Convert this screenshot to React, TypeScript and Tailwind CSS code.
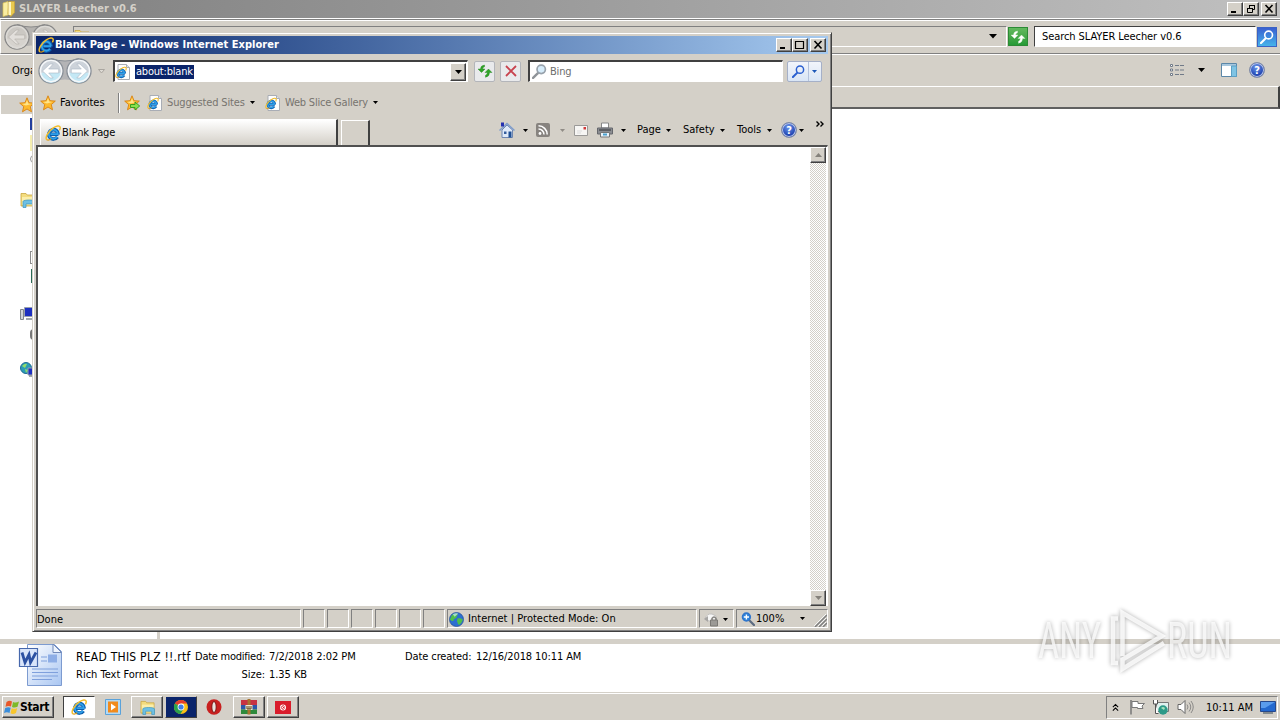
import type { ReactNode } from 'react';
import clsx from 'clsx';

const inset = 'border border-t-[#808080] border-l-[#808080] border-r-white border-b-white';
const raised =
  'border border-t-white border-l-white border-r-[#404040] border-b-[#404040] shadow-[inset_-1px_-1px_0_#808080]';

function Arrow({ className, color = '#000', w = 5 }: { className?: string; color?: string; w?: number }) {
  return (
    <svg className={clsx('shrink-0', className)} width={w} height={(w + 1) / 2} viewBox="0 0 6 3" preserveAspectRatio="none">
      <path d="M0 0h6L3 3z" fill={color} />
    </svg>
  );
}

function IeMark() {
  return (
    <>
      <path d="M13.4 9.2H5.2M13.2 9.4A4.7 4.7 0 1 0 12.4 12" fill="none" stroke="#0d5fae" strokeWidth="3.6" />
      <path d="M13 9.1H5.5M12.8 9.2A4.5 4.5 0 1 0 12 11.8" fill="none" stroke="#2fa0ea" strokeWidth="1.8" />
      <path d="M2 14.8C-.5 13 3 6.500 8 3.200 11.500 .8 15 .2 15.200 2.500c.1 1-.3 2-.8 2.800" fill="none" stroke="#f3bd2b" strokeWidth="1.500" />
      <path d="M2 14.8c1 .6 2.800 0 4.200-1" fill="none" stroke="#d99a14" strokeWidth="1.300" />
    </>
  );
}

function IeIcon({ size = 16, className }: { size?: number; className?: string }) {
  return (
    <svg className={clsx('shrink-0', className)} width={size} height={size} viewBox="0 0 16 16">
      <IeMark />
    </svg>
  );
}

function IePage({ className }: { className?: string }) {
  return (
    <svg className={clsx('shrink-0', className)} width="16" height="16" viewBox="0 0 16 16">
      <path d="M3 .5h8.500l3 3v12H3z" fill="#fdfdfd" stroke="#a9adb5" />
      <path d="M11.500 .5v3h3" fill="#dfe3ea" stroke="#a9adb5" />
      <g transform="translate(0 2.500) scale(.74)">
        <IeMark />
      </g>
    </svg>
  );
}

function Star({ add, className }: { add?: boolean; className?: string }) {
  return (
    <svg className={clsx('shrink-0', className)} width="16" height="16" viewBox="0 0 16 16">
      <path d="M8 .8l2 4.900 5.300.4-4 3.500 1.200 5.200L8 12l-4.500 2.800 1.200-5.200-4-3.500L6 5.700z" fill="#fdb92c" stroke="#d98212" strokeWidth=".9" />
      <path d="M8 3l1.200 3.600 3.300.4-5.500 1.500-4-1.500 3.700-.4z" fill="#ffe48a" />
      {add && <path d="M6.500 9.500h4.500V7l4.700 4-4.700 4v-2.500H6.500z" fill="#8be04e" stroke="#2a9a1e" strokeWidth=".9" />}
    </svg>
  );
}

function Folder({ library, size = 16, className }: { library?: boolean; size?: number; className?: string }) {
  return (
    <svg className={clsx('shrink-0', className)} width={size} height={size} viewBox="0 0 16 16">
      <path d="M1 1.500h5l1.200 1.500H15v11H1z" fill="#f3dc7e" stroke="#c9a640" strokeWidth=".8" />
      <path d="M2 5h12.500v8H2z" fill="#fbeeaa" />
      {library && <path d="M3 15.500V9.500C3 7.500 15.500 7.500 15.500 9.500v6h-3V12H6v3.500z" fill="#6ec0e4" stroke="#3c92bb" strokeWidth=".7" />}
    </svg>
  );
}

function FolderSide() {
  return (
    <svg className="shrink-0" width="14" height="16" viewBox="0 0 14 16">
      <path d="M1 2l5-1.500V14l-5 1.500z" fill="#f9eda2" stroke="#d9bf52" strokeWidth=".7" />
      <path d="M7 .5h5.500v11L9 15.500 6 13z" fill="#e9c94f" stroke="#c9a23a" strokeWidth=".7" />
      <path d="M6.500 1h2.500v13H6.500z" fill="#fff6c4" />
    </svg>
  );
}

type MagnifierProps = { rim: string; glass?: string; handle: string; size?: number; plus?: boolean; flip?: boolean };

function Magnifier({ rim, glass = 'none', handle, size = 14, plus, flip }: MagnifierProps) {
  return (
    <svg className={clsx('shrink-0', flip && '-scale-x-100')} width={size} height={size} viewBox="0 0 14 14">
      <path d="M5.500 8.500L1 13" stroke={handle} strokeWidth="2.200" strokeLinecap="round" />
      <circle cx="8.600" cy="5" r="3.900" fill={glass} stroke={rim} strokeWidth="1.600" />
      {plus && <path d="M6 5h5.200M8.600 2.400v5.200" stroke="#fff" strokeWidth="1.400" />}
    </svg>
  );
}

function Help() {
  return (
    <span className="flex h-4 w-4 shrink-0 items-center justify-center rounded-full border border-[#7f8aa6] bg-[radial-gradient(circle_at_45%_30%,#6b95ea,#1c3fae_70%)] text-[11px] leading-none font-bold text-white shadow-[inset_0_0_0_1px_#b9c6e8]">
      ?
    </span>
  );
}

function WinButton({ children, className }: { children: ReactNode; className?: string }) {
  return (
    <span className={clsx('flex h-[14px] w-4 shrink-0 items-center justify-center bg-[#d4d0c8]', raised, className)}>
      <svg width="12" height="10" viewBox="0 0 12 10" fill="none" stroke="#000">
        {children}
      </svg>
    </span>
  );
}

function NavPair({ faded }: { faded?: boolean }) {
  const ring = faded ? '#8a8a8a' : '#8b9199';
  const fill = faded ? '#cbc8c3' : '#cdd3da';
  const low = faded ? '#d6d3ce' : '#c4e8f5';
  return (
    <svg className="shrink-0" width="56" height="28" viewBox="0 0 56 28">
      <path d="M14 1.500q14 5 28 0v24q-14-6-28 0z" fill={faded ? '#b5b3b0' : '#b4b4b6'} />
      <path d="M14 1.500q14 5 28 0" stroke={ring} fill="none" />
      {[14, 42].map((cx) => (
        <g key={cx}>
          <circle cx={cx} cy="14" r="12" fill={fill} stroke={ring} strokeWidth="1.400" />
          <path d={`M${cx - 10.5} 16a10.500 10 0 0 0 21 0q-10.500-2-21 0`} fill={low} />
          <circle cx={cx} cy="14" r="10.600" fill="none" stroke={faded ? '#dcdad6' : '#f6f8fa'} strokeWidth="1.400" />
        </g>
      ))}
      <g fill={faded ? '#e2dfdb' : '#fff'} stroke={faded ? '#b2afaa' : '#a9b6c2'} strokeWidth=".6">
        <path d="M5.500 14l7.500-7h3.200l-4.500 5h10v4h-10l4.500 5H13z" />
        <path d="M50.500 14l-7.500-7h-3.200l4.500 5h-10v4h10l-4.500 5H43z" />
      </g>
    </svg>
  );
}

function Refresh({ color, edge }: { color: string; edge: string }) {
  return (
    <svg width="16" height="16" viewBox="0 0 16 16" fill={color} stroke={edge} strokeWidth=".4">
      <path d="M4.500 9.500L1 6h2.500Q3.500 2.500 7.500 2v1.800Q5.700 4.200 5.600 6H8z" />
      <path d="M11.500 6l3.500 3.500h-2.500q0 4-4 4.800v-2q1.900-.6 1.900-2.800H8z" />
    </svg>
  );
}

function Globe() {
  return (
    <svg className="shrink-0" width="15" height="15" viewBox="0 0 16 16">
      <circle cx="8" cy="8" r="7.500" fill="#2d6fd0" stroke="#1d4a94" strokeWidth=".7" />
      <path d="M3 3.500c2-2 5-2.500 6-1.500s-1 2-1 3.500-3 1-3 3-3 1-4-.5zM9 7c2-1 5 0 5.500 1S12 14 10.500 13.500 9.500 11 8.500 10z" fill="#4fc04a" />
      <path d="M4 2.500q3-2 6-.8L6 5z" fill="#cdeaff" fillOpacity=".7" />
    </svg>
  );
}

function Monitor({ globe, className }: { globe?: boolean; className?: string }) {
  return (
    <svg className={clsx('shrink-0', className)} width="16" height="16" viewBox="0 0 16 16">
      {globe ? <circle cx="6" cy="6" r="5.500" fill="#2c9bb5" stroke="#1e6a94" /> : <path d="M.5 3.500h3v10h-3z" fill="#d0d4d8" stroke="#80868c" />}
      {globe && <path d="M2 4q3-3 5-2l-2 4zM5 7l3 1-2 3z" fill="#8fdc6a" />}
      <path d={globe ? 'M8 6h8v7H8z' : 'M4.500 1.500h11v9h-11z'} fill="#1c2fc0" stroke="#98a0ae" />
      <path d={globe ? 'M9 14h6' : 'M6 13h8'} stroke="#808890" strokeWidth="1.500" />
    </svg>
  );
}

function ExplorerWindow() {
  return (
    <section className="flex h-[693px] flex-col bg-white">
      <header className="flex h-[18px] shrink-0 items-center bg-gradient-to-r from-[#808080] to-[#c0c0c0] pr-[3px] pl-[2px]">
        <FolderSide />
        <h1 className="ml-[3px] pt-px text-[11px] font-bold tracking-[0.05px] text-[#d4d0c8]">SLAYER Leecher v0.6</h1>
        <WinButton className="ml-auto">
          <path d="M2 8h5" strokeWidth="2" />
        </WinButton>
        <WinButton>
          <path d="M4.500 4V1.500h5v4H8M4 1.500h6M2.500 4.500h5v4h-5zM2 4.500h6" />
        </WinButton>
        <WinButton className="ml-[2px]">
          <path d="M2.500 1l7 7.500M9.500 1l-7 7.500" strokeWidth="1.600" />
        </WinButton>
      </header>

      <div className="mt-px flex h-[35px] shrink-0 items-center border-t border-b border-l border-t-[#808080] border-b-[#808080] border-l-white bg-[#d4d0c8] pl-[2px] shadow-[inset_0_1px_0_#fff]">
        <NavPair faded />
        <div className={clsx('ml-[14px] flex h-[21px] w-[934px] items-center bg-[#d4d0c8] pr-[9px]', inset)}>
          <Folder />
          <Arrow className="ml-auto" w={8} />
        </div>
        <span className="ml-px flex h-[19px] w-5 items-center justify-center border border-[#2c8a35] bg-gradient-to-b from-[#62b95e] to-[#249a35]">
          <Refresh color="#fff" edge="#d9f2d6" />
        </span>
        <div className="ml-[6px] flex h-[21px] w-[222px] items-center border border-t-[#404040] border-r-white border-b-white border-l-[#404040] bg-white pt-[2px] pl-[7px] text-[11px] tracking-[-0.08px]">
          Search SLAYER Leecher v0.6
        </div>
        <span className="ml-px flex h-5 w-5 items-center justify-center border border-[#3b63c4] bg-gradient-to-b from-[#3a5fd0] to-[#46b3ea]">
          <Magnifier rim="#fff" handle="#fff" />
        </span>
      </div>

      <div className="flex h-8 shrink-0 items-center border-t border-white bg-[#d4d0c8] pr-[15px] pb-px pl-3 text-[11px]">
        <span className="pt-[2px]">Organize</span>
        <svg className="ml-auto" width="16" height="14" viewBox="0 0 16 14">
          <path d="M1.500 1.500h2v2h-2zM1.500 6h2v2h-2zM1.500 10.500h2v2h-2z" fill="#fff" stroke="#707a88" />
          <path d="M6 2.500h4M11 2.500h4M6 7h4M11 7h4M6 11.500h4M11 11.500h4" stroke="#707a88" />
        </svg>
        <Arrow className="ml-[13px]" w={7} />
        <svg className="ml-4" width="16" height="14" viewBox="0 0 16 14">
          <path d="M.5 .5h15v13H.5z" fill="#fff" stroke="#5b87a8" />
          <path d="M1 1h14v2H1z" fill="#a7c7de" />
          <path d="M10.500 3v10.500h5V3z" fill="#7fc4e4" stroke="#5b9fc4" />
        </svg>
        <span className="ml-3">
          <Help />
        </span>
      </div>

      <div className="flex min-h-0 flex-1">
        <aside className="flex w-[157px] shrink-0 flex-col pt-[9px]">
          <div className="ml-px flex h-[19px] items-center bg-[#d4d0c8] pl-[18px]">
            <Star />
          </div>
          <div className="mt-1 ml-[30px] h-3 w-4 bg-[#223e9e]" />
          <div className="mt-[5px] ml-[30px] h-4 w-4 bg-[#f5eeb0]" />
          <div className="mt-1 ml-[30px] h-2 w-4 rounded border border-[#999]" />
          <Folder library className="mt-[29px] ml-5" />
          <div className="mt-[43px] ml-[30px] h-[13px] w-4 border border-[#8c8c8c] bg-white" />
          <div className="mt-[5px] ml-[31px] h-[14px] w-4 bg-[#2a6a56]" />
          <Monitor className="mt-[23px] ml-5" />
          <div className="mt-[7px] ml-[30px] h-[11px] w-4 rounded bg-[#777]" />
          <Monitor globe className="mt-[22px] ml-5" />
        </aside>
        <div className="w-[3px] shrink-0 bg-[#d4d0c8]" />
        <div className="flex-1">
          <div className="h-[23px] border-t border-r-2 border-b-2 border-t-white border-r-[#404040] border-b-[#606060] bg-[#d4d0c8]" />
        </div>
      </div>

      <footer className="flex h-[54px] shrink-0 border-t-[5px] border-b border-t-[#d4d0c8] border-b-[#d4d0c8] pl-[18px] text-[11px] leading-[18px]">
        <svg className="-mt-px shrink-0" width="46" height="44" viewBox="0 0 46 44">
          <defs>
            <linearGradient id="doc" x1="0" y1="0" x2="1" y2="1">
              <stop offset="0" stopColor="#fff" />
              <stop offset="1" stopColor="#a9c6f2" />
            </linearGradient>
          </defs>
          <path d="M9.500 1.500h27l7 7v34h-34z" fill="url(#doc)" stroke="#7d9bd0" />
          <path d="M35 1v8.500h8.500z" fill="#eef4fd" stroke="#7189b8" />
          <path d="M23 14h6M23 18h6M14 26h26M14 29.500h26M14 33h26M14 36.500h20" stroke="#7fa0dc" />
          <path d="M30 11.500h9v8h-9z" fill="#8eaee6" />
          <path d="M1.500 5.500h18v18h-18z" fill="#d9e5fa" stroke="#4668ac" strokeWidth="1.200" />
          <path d="M4 9.500l3 10 4-8 1.500 8 5.500-10" fill="none" stroke="#2c51a2" strokeWidth="2.800" />
        </svg>
        <div className="ml-3 w-[119px] pt-1 whitespace-nowrap">
          <p className="text-[12px] tracking-[0.25px]">READ THIS PLZ !!.rtf</p>
          <p>Rich Text Format</p>
        </div>
        <dl className="grid grid-cols-[70px_132px_68px_auto] grid-rows-[18px_18px] gap-x-1 pt-1 tracking-[-0.05px] whitespace-nowrap">
          <dt className="text-right tracking-[-0.25px]">Date modified:</dt>
          <dd>7/2/2018 2:02 PM</dd>
          <dt className="tracking-[-0.1px]">Date created:</dt>
          <dd className="-ml-px tracking-[-0.1px]">12/16/2018 10:11 AM</dd>
          <dt className="text-right">Size:</dt>
          <dd>1.35 KB</dd>
        </dl>
      </footer>
    </section>
  );
}

function CommandBar() {
  return (
    <div className="flex h-[18px] items-center self-start text-[11px]">
      <svg width="16" height="16" viewBox="0 0 16 16">
        <path d="M3 8v7.500h10.500V8L8 3z" fill="#dfe9f8" stroke="#6f86b0" />
        <path d="M.5 8.500L8 1.500l7.500 7" fill="none" stroke="#7e9ccc" strokeWidth="1.500" />
        <path d="M2 .5h3v4H2z" fill="#2430b0" />
        <path d="M9.500 9.500h3v6h-3z" fill="#1f4f94" />
        <path d="M5 9.500h2.500V12H5z" fill="#365d9c" />
      </svg>
      <Arrow className="ml-2" />
      <svg className="ml-2" width="14" height="14" viewBox="0 0 14 14">
        <rect width="14" height="14" rx="2" fill="#87837f" />
        <path d="M2.500 6a5.500 5.500 0 0 1 5.500 5.500M2.500 2.800a8.700 8.700 0 0 1 8.700 8.700" fill="none" stroke="#fff" strokeWidth="1.500" />
        <circle cx="4" cy="10.500" r="1.400" fill="#fff" />
      </svg>
      <Arrow className="ml-[10px]" color="#908c86" />
      <svg className="ml-[9px]" width="14" height="11" viewBox="0 0 14 11">
        <path d="M.5 .5h13v10H.5z" fill="#f7f6f4" stroke="#9b9a98" />
        <path d="M9.500 2h2.500v2.500H9.500z" fill="#d03a3a" />
        <path d="M3 6h5M3 8h4" stroke="#ddd" />
      </svg>
      <svg className="ml-[9px]" width="16" height="16" viewBox="0 0 16 16">
        <path d="M4.500 1h7v5h-7z" fill="#fff" stroke="#888" />
        <path d="M.5 6h15v6H.5z" fill="#8b8d92" stroke="#65676c" />
        <path d="M2 8h12" stroke="#303236" />
        <path d="M3.500 10.500h9v4.500h-9z" fill="#e9f3fa" stroke="#777" />
        <path d="M6 12.500h4" stroke="#4ba0cf" strokeWidth="2" />
      </svg>
      <Arrow className="ml-2" />
      <span className="ml-[11px] w-[25px] pt-px">Page</span>
      <Arrow className="ml-1" />
      <span className="ml-3 w-[32px] pt-px">Safety</span>
      <Arrow className="ml-[5px]" />
      <span className="ml-3 w-[26px] pt-px">Tools</span>
      <Arrow className="ml-1" />
      <span className="ml-[9px]">
        <Help />
      </span>
      <Arrow className="ml-[2px]" />
      <svg className="mb-[13px] ml-3" width="8" height="6" viewBox="0 0 8 6" fill="none" stroke="#000" strokeWidth="1.400">
        <path d="M.5 .5L3 3 .5 5.500M4.500 .5L7 3 4.500 5.500" />
      </svg>
    </div>
  );
}

function ScrollButton({ up }: { up?: boolean }) {
  return (
    <span className={clsx('flex h-4 w-4 items-center justify-center bg-[#d4d0c8]', raised)}>
      <Arrow color="#85827c" w={7} className={up ? 'rotate-180' : undefined} />
    </span>
  );
}

function BrowserWindow() {
  return (
    <section className="absolute top-8 left-8 flex h-[600px] w-[800px] flex-col border border-t-[#d4d0c8] border-r-[#404040] border-b-[#404040] border-l-[#d4d0c8] bg-[#d4d0c8] p-[3px] shadow-[inset_1px_1px_0_#fff,inset_-1px_-1px_0_#808080]">
      <header className="flex h-[18px] shrink-0 items-center bg-gradient-to-r from-[#0a246a] to-[#a6caf0] pr-[2px] pl-[2px] text-white">
        <IeIcon />
        <h2 className="ml-px pt-px text-[11px] font-bold tracking-[0.03px] whitespace-nowrap">Blank Page - Windows Internet Explorer</h2>
        <WinButton className="ml-auto">
          <path d="M2 8h5" strokeWidth="2" />
        </WinButton>
        <WinButton>
          <path d="M1.500 1.500h8v7h-8zM1 1.500h9" strokeWidth="1.200" />
        </WinButton>
        <WinButton className="ml-[2px]">
          <path d="M2.500 1l7 7.500M9.500 1l-7 7.500" strokeWidth="1.600" />
        </WinButton>
      </header>

      <div className="flex h-[35px] shrink-0 items-center pb-px pl-px text-[11px]">
        <NavPair />
        <svg className="ml-[5px] shrink-0" width="7" height="5" viewBox="0 0 7 5">
          <path d="M.5 .5h6l-3 3.500z" fill="#dedbd5" stroke="#aaa6a0" />
        </svg>
        <div className="ml-2 flex h-[22px] w-[355px] items-center border-t-2 border-r border-b border-l-2 border-t-[#404040] border-r-white border-b-white border-l-[#404040] bg-white">
          <IePage />
          <span className="ml-1 bg-[#0a246a] pr-px pl-px leading-[14px] tracking-[-0.2px] text-white">about:blank</span>
          <span className={clsx('mr-px ml-auto flex h-[18px] w-4 items-center justify-center bg-[#d4d0c8]', raised)}>
            <Arrow w={7} />
          </span>
        </div>
        <span className="ml-[6px] flex h-[21px] w-[21px] items-center justify-center rounded-[2px] border border-[#b3b5ba] bg-[#e9eaec]">
          <Refresh color="#2fa528" edge="#1e7d1a" />
        </span>
        <span className="ml-[5px] flex h-[21px] w-[21px] items-center justify-center rounded-[2px] border border-[#b3b5ba] bg-[#e9eaec]">
          <svg width="12" height="12" viewBox="0 0 12 12">
            <path d="M1 1l10 10M11 1L1 11" stroke="#c8434f" strokeWidth="1.800" />
          </svg>
        </span>
        <div className="ml-[7px] flex h-[22px] w-[255px] items-center border-t-2 border-r border-b border-l-2 border-t-[#404040] border-r-white border-b-white border-l-[#404040] bg-white pl-[2px] text-[#6d6d6d]">
          <Magnifier rim="#98a2ac" glass="#d6ecfa" handle="#8f9499" size={15} />
          <span className="ml-[3px] pt-px tracking-[-0.2px]">Bing</span>
        </div>
        <div className="ml-1 flex h-[21px] w-[35px] items-center rounded-[2px] border border-[#a5b0c8] bg-gradient-to-b from-[#f2f5fb] to-[#d9e5f5]">
          <span className="flex h-full w-[21px] items-center justify-center border-r border-[#b4c2dc]">
            <Magnifier rim="#2a5fd0" handle="#2a5fd0" size={13} />
          </span>
          <Arrow className="ml-[3px]" color="#1c57b8" />
        </div>
      </div>

      <div className="flex h-[27px] shrink-0 items-center pl-1 text-[11px] text-[#77746f]">
        <Star />
        <span className="ml-1 w-[46px] pt-px text-black">Favorites</span>
        <span className="ml-3 h-5 w-[2px] border-r border-l border-r-white border-l-[#808080]" />
        <Star add className="ml-1" />
        <IePage className="ml-[7px]" />
        <span className="ml-1 w-[78px] pt-[2px] tracking-[-0.15px] whitespace-nowrap">Suggested Sites</span>
        <Arrow className="ml-[5px]" />
        <IePage className="ml-[10px]" />
        <span className="ml-1 w-[83px] pt-[2px] tracking-[-0.2px] whitespace-nowrap">Web Slice Gallery</span>
        <Arrow className="ml-[5px]" />
      </div>

      <div className="flex h-[29px] shrink-0 items-end pl-1 text-[11px]">
        <div className="flex h-[26px] w-[298px] items-center border-t border-r-2 border-l border-t-white border-r-[#404040] border-l-white bg-gradient-to-b from-white to-[#d4d0c8] pl-1">
          <IeIcon />
          <span className="ml-px pt-px tracking-[-0.15px]">Blank Page</span>
        </div>
        <div className="ml-[3px] h-[25px] w-[29px] border-t border-r-2 border-l border-t-white border-r-[#404040] border-l-white" />
        <div className="ml-auto flex h-full pt-[5px] pr-[4px]">
          <CommandBar />
        </div>
      </div>

      <div className="flex min-h-0 flex-1 border-t-2 border-r border-l-2 border-t-[#505050] border-r-white border-l-[#505050] bg-white">
        <div className="flex-1" />
        <div className="mr-px flex w-4 flex-col justify-between bg-[repeating-conic-gradient(#d4d0c8_0_25%,#fff_0_50%)] bg-[length:2px_2px]">
          <ScrollButton up />
          <ScrollButton />
        </div>
      </div>

      <footer className="mt-[3px] flex h-[19px] shrink-0 gap-[2px] text-[11px]">
        <div className={clsx('w-[265px] leading-[19px]', inset)}>Done</div>
        {[0, 1, 2, 3, 4, 5].map((i) => (
          <div key={i} className={clsx('w-[22px]', inset)} />
        ))}
        <div className={clsx('flex w-[250px] items-center pt-px pl-px', inset)}>
          <Globe />
          <span className="ml-1 pt-px tracking-[0.03px] whitespace-nowrap">Internet | Protected Mode: On</span>
        </div>
        <div className={clsx('flex w-[35px] items-center pt-px pl-[3px]', inset)}>
          <svg width="16" height="15" viewBox="0 0 16 15">
            <path d="M2 7q2-6 7-5l4 2v5H6z" fill="#f6f6f6" stroke="#c0bfbd" />
            <path d="M1 7l4-3v6z" fill="#a7a6a4" />
            <path d="M9 8V6.500q2-3 4 0V8" fill="none" stroke="#85837f" strokeWidth="1.500" />
            <path d="M7.500 8h7v6h-7z" fill="#9c9a96" stroke="#7b7975" />
          </svg>
          <Arrow className="ml-1" />
        </div>
        <div className={clsx('flex flex-1 items-center pl-1', inset)}>
          <Magnifier rim="#2f76cc" glass="#2f86dd" handle="#5b6a80" size={14} plus flip />
          <span className="ml-px w-[31px] pt-[2px]">100%</span>
          <Arrow className="ml-[13px]" />
          <svg className="mt-auto ml-auto" width="13" height="13" viewBox="0 0 13 13">
            <path d="M1 13L13 1M5 13l8-8M9 13l4-4" stroke="#808080" strokeWidth="1.500" />
            <path d="M0 12L12 0M4 12l8-8M8 12l4-4" stroke="#fff" strokeWidth=".8" />
          </svg>
        </div>
      </footer>
    </section>
  );
}

function TaskButton({ children, className }: { children: ReactNode; className?: string }) {
  return <span className={clsx('flex h-[22px] w-8 items-center justify-center', className)}>{children}</span>;
}

function Taskbar() {
  return (
    <nav className="flex h-[27px] items-center border-t border-white bg-[#d4d0c8] pr-[2px] pl-[2px] text-[11px]">
      <span className={clsx('flex h-[22px] w-[52px] items-center pl-px', raised)}>
        <svg width="16" height="16" viewBox="0 0 16 16">
          <path d="M2.500 3q3-2 5.500-.5L7 7.500q-2.500-1.200-5.500.3z" fill="#e8582a" />
          <path d="M9 3q3 1.300 6-.5l-1.500 5.200q-2.800 1.500-5.500.3z" fill="#7db928" />
          <path d="M1.200 9q3-1.500 5.500-.3L5.500 14Q3 12.500 0 14z" fill="#3b8edb" />
          <path d="M7.700 9.200q3 1.300 5.500-.3L12 14q-3 1.700-5.500.3z" fill="#f8c62c" />
        </svg>
        <b className="text-[12px] tracking-[-0.35px]">Start</b>
      </span>
      <TaskButton className="ml-[9px] border border-t-[#404040] border-r-white border-b-white border-l-[#404040] bg-white">
        <IeIcon />
      </TaskButton>
      <TaskButton className="ml-[2px]">
        <svg width="16" height="16" viewBox="0 0 16 16">
          <path d="M.5 .5h15v15H.5z" fill="#b5d9f3" stroke="#5aa2da" />
          <path d="M3 2.500h10v11H3z" fill="#f18a1c" />
          <path d="M6 4.500l5 3.500-5 3.500z" fill="#fff" />
        </svg>
      </TaskButton>
      <TaskButton className={clsx('ml-[2px]', raised)}>
        <Folder library size={15} />
      </TaskButton>
      <TaskButton className="ml-[2px] border border-t-[#d4d0c8] border-r-[#404040] border-b-[#404040] border-l-[#d4d0c8] bg-[#0a246a]">
        <svg width="16" height="16" viewBox="0 0 16 16">
          <circle cx="8" cy="8" r="7" fill="#fbc116" />
          <path d="M8 8L1.900 4.500A7 7 0 0 1 14.100 4.500H8z" fill="#e33b2e" />
          <path d="M8 8L1.900 4.500A7 7 0 0 0 7.500 15L10.500 10z" fill="#2ba24c" />
          <circle cx="8" cy="8" r="3.400" fill="#fff" />
          <circle cx="8" cy="8" r="2.600" fill="#3f7fe8" />
        </svg>
      </TaskButton>
      <TaskButton className="ml-px">
        <svg width="16" height="16" viewBox="0 0 16 16">
          <ellipse cx="8" cy="8" rx="7.500" ry="7.700" fill="#c8201f" />
          <ellipse cx="8" cy="8" rx="2.200" ry="5.500" fill="#e8e4de" stroke="#7e100f" />
        </svg>
      </TaskButton>
      <TaskButton className={clsx('ml-[3px]', raised)}>
        <svg width="16" height="16" viewBox="0 0 16 16">
          <path d="M0 1h16v5H0z" fill="#c73343" />
          <path d="M0 6h16v4.500H0z" fill="#2e57a8" />
          <path d="M0 10.500h16V15H0z" fill="#2e8a3c" />
          <path d="M6.500 0h3v15.500h-3z" fill="#a8732f" />
          <path d="M4.500 6h7v5h-7z" fill="#f2e8d0" />
          <path d="M6 7v3h4V7M8 7v3" stroke="#5b4217" fill="none" />
        </svg>
      </TaskButton>
      <TaskButton className={clsx('ml-[2px]', raised)}>
        <svg width="16" height="13" viewBox="0 0 16 13">
          <path d="M0 0h16v13H0z" fill="#d91c2b" />
          <circle cx="8" cy="6.500" r="3" fill="#fff" />
          <path d="M9.500 5.500a1.700 1.700 0 1 0 0 2M8 6.500h1.500" fill="none" stroke="#d91c2b" />
        </svg>
      </TaskButton>

      <div className={clsx('ml-auto flex h-[23px] w-[172px] items-center pl-[5px]', inset)}>
        <svg width="7" height="9" viewBox="0 0 8 10" fill="none" stroke="#000" strokeWidth="1.300">
          <path d="M1 4.500l3-3 3 3M1 8.500l3-3 3 3" />
        </svg>
        <svg className="ml-[10px]" width="16" height="16" viewBox="0 0 16 16">
          <path d="M2 1v14.500" stroke="#777" strokeWidth="1.500" />
          <path d="M3 2.500h6v2h6.500L13 7l1 2.500H8.500v-1H3z" fill="#fff" stroke="#777" />
        </svg>
        <svg className="ml-2" width="16" height="16" viewBox="0 0 16 16">
          <path d="M3.500 3.500h12v9h-12z" fill="#dff1ee" stroke="#777" />
          <circle cx="10" cy="11" r="4.700" fill="#2c9a88" />
          <path d="M8 9q2-2 4 0l-1 2z" fill="#a9e3bb" />
          <path d="M.5 1v4h4V1M2.500 5v9.500h3" fill="#fff" stroke="#555" />
        </svg>
        <svg className="ml-2" width="17" height="16" viewBox="0 0 17 16">
          <path d="M1 5.500h3l4-4v13l-4-4H1z" fill="#fff" stroke="#666" />
          <path d="M10 5.500q2 2.500 0 5M12 3.500q3.500 4.500 0 9M14 2q4.500 6 0 12" fill="none" stroke="#777" strokeWidth=".8" />
        </svg>
        <span className="ml-3 w-[46px] pt-[2px] whitespace-nowrap">10:11 AM</span>
        <svg className="ml-2" width="16" height="14" viewBox="0 0 16 14">
          <path d="M.5 1.500h15v10H.5z" fill="#2469cf" stroke="#26488c" />
          <path d="M1 2h14L5 8H1z" fill="#5a9ced" />
          <path d="M3 13h10" stroke="#345" />
        </svg>
      </div>
    </nav>
  );
}

function Watermark() {
  return (
    <svg
      className="absolute top-[600px] left-[1030px] drop-shadow-[0_0_2px_rgba(0,0,0,0.4)]"
      width="240"
      height="85"
      viewBox="0 0 240 85"
      fill="#fff"
      fillOpacity=".75"
    >
      <g fontFamily="Roboto" fontSize="50">
        <text x="8" y="58" textLength="63" lengthAdjust="spacingAndGlyphs">ANY</text>
        <text x="137" y="58" textLength="65" lengthAdjust="spacingAndGlyphs">RUN</text>
      </g>
      <g fill="none" stroke="#fff" strokeOpacity=".8" strokeWidth="4.500">
        <path d="M88 18.500h-5V63h5" />
        <path d="M92.500 56V13L132 36 92.500 59.500V69L134 43" />
      </g>
    </svg>
  );
}

export default function App() {
  return (
    <main className="relative h-[720px] w-[1280px] overflow-hidden bg-white font-['DejaVu_Sans_Condensed','DejaVu_Sans',sans-serif] text-black [font-stretch:condensed]">
      <ExplorerWindow />
      <Taskbar />
      <BrowserWindow />
      <Watermark />
    </main>
  );
}
